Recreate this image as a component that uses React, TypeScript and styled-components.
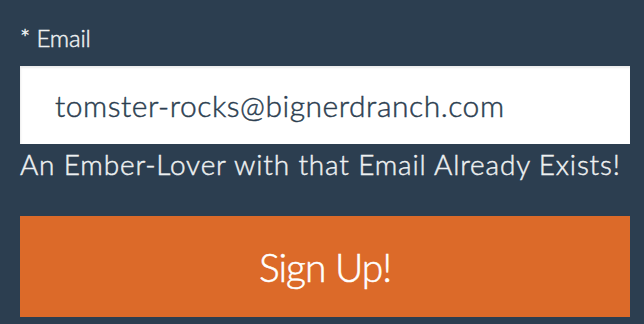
import React from "react";
import styled, { createGlobalStyle } from "styled-components";

const Global = createGlobalStyle`
  html, body {
    margin: 0;
    padding: 0;
    background: #2c3e50;
  }
  body {
    font-family: Lato, "Open Sans", sans-serif;
    -webkit-font-smoothing: antialiased;
  }
`;

const Form = styled.form`
  display: flex;
  flex-direction: column;
  padding: 23px 14px 0 20px;
  width: 644px;
  height: 324px;
  box-sizing: border-box;
  background: #2c3e50;
`;

const Label = styled.label`
  display: block;
  color: #eef1f2;
  font-size: 24px;
  font-weight: 300;
  -webkit-text-stroke: 0.45px #eef1f2;
  letter-spacing: -0.15px;
  line-height: 29px;
  margin-bottom: 14px;
`;

const Input = styled.input`
  display: block;
  box-sizing: border-box;
  width: 610px;
  height: 78px;
  margin: 0;
  border: none;
  outline: none;
  padding: 0 0 0 35px;
  background: #ffffff;
  box-shadow: inset 1px 2px 2px rgba(0, 0, 0, 0.08);
  color: #2c3e50;
  font-family: Lato, "Open Sans", sans-serif;
  font-size: 30px;
  font-weight: 300;
  -webkit-text-stroke: 0.45px #2c3e50;
  letter-spacing: 0.53px;
`;

const ErrorText = styled.div`
  color: #eef1f2;
  font-size: 28px;
  font-weight: 300;
  -webkit-text-stroke: 0.45px #eef1f2;
  letter-spacing: 0.83px;
  line-height: 34px;
  margin-top: 3px;
`;

const Submit = styled.button`
  display: block;
  box-sizing: border-box;
  width: 610px;
  height: 101px;
  margin-top: 35px;
  border: none;
  padding: 0;
  background: #dc6a29;
  color: #ffffff;
  font-family: Lato, "Open Sans", sans-serif;
  font-size: 39px;
  font-weight: 300;
  -webkit-text-stroke: 0.5px #ffffff;
  letter-spacing: -1.05px;
  cursor: pointer;
`;

export default function App() {
  return (
    <>
      <Global />
      <Form onSubmit={(e) => e.preventDefault()}>
        <Label htmlFor="email">* Email</Label>
        <Input
          id="email"
          type="email"
          defaultValue="tomster-rocks@bignerdranch.com"
        />
        <ErrorText>An Ember-Lover with that Email Already Exists!</ErrorText>
        <Submit type="submit">Sign Up!</Submit>
      </Form>
    </>
  );
}
